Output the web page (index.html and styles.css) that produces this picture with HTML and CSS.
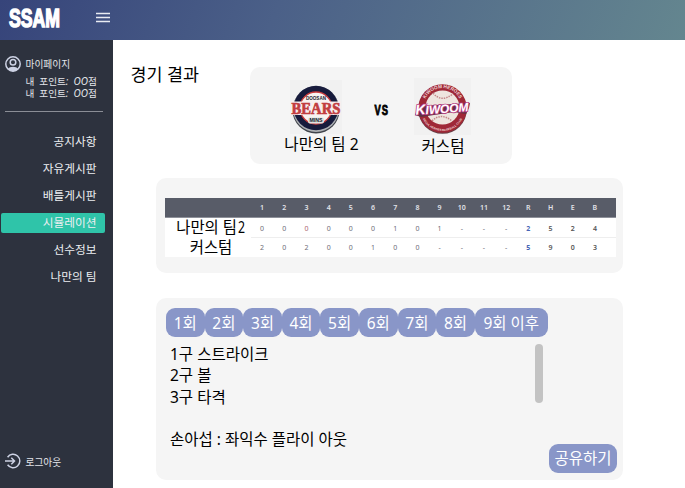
FILE: index.html
```html
<!DOCTYPE html>
<html lang="ko">
<head>
<meta charset="utf-8">
<title>SSAM</title>
<link rel="stylesheet" href="styles.css">
</head>
<body>
<header class="topbar">
  <svg class="logo" width="54" height="32" viewBox="0 0 54 32"><text x="1" y="24.8" textLength="51" lengthAdjust="spacingAndGlyphs">SSAM</text></svg>
  <svg class="burger" width="14" height="12" viewBox="0 0 14 12"><path d="M0 1.5h14M0 5.5h14M0 9.6h14"/></svg>
</header>
<div class="shell">
  <aside class="sidebar">
    <div class="profile">
      <svg width="16" height="16" viewBox="0 0 16 16"><circle cx="8" cy="8" r="7.2"/><circle cx="8" cy="6.3" r="2.8"/><path class="fill" d="M2.8 13C4.8 10 11.2 10 13.2 13C10.5 16 5.5 16 2.8 13Z"/></svg>
      <span>마이페이지</span>
    </div>
    <div class="points"><div>내&nbsp; 포인트<i>:&nbsp; OO</i>점</div><div>내&nbsp; 포인트<i>:&nbsp; OO</i>점</div></div>
    <nav class="menu">
      <a>공지사항</a><a>자유게시판</a><a>배틀게시판</a><a class="active">시뮬레이션</a><a>선수정보</a><a>나만의 팀</a>
    </nav>
    <div class="logout">
      <svg width="16" height="16" viewBox="0 0 16 16"><path d="M2.6 4.2A6.7 6.7 0 1 1 2.6 11.8M0 8h9.5M6.3 4.8L9.5 8L6.3 11.2"/></svg>
      <span>로그아웃</span>
    </div>
  </aside>
  <main class="content">
    <div class="top">
      <h1>경기 결과</h1>
      <section class="card match">
        <div class="team home">
          <svg width="52" height="54" viewBox="0 0 52 54">
            <rect width="52" height="54" fill="#f1f1f1"/>
            <circle cx="26" cy="30" r="23.5" fill="#40444b"/>
            <circle cx="26" cy="29" r="23" fill="#aeb1b5"/>
            <circle cx="26" cy="28" r="22.3" fill="#171b3c"/>
            <circle cx="26" cy="28" r="16" fill="#f7f3f1" stroke="#c93c3e" stroke-width="1.3"/>
            <text x="16" y="19.5" textLength="20" lengthAdjust="spacingAndGlyphs" class="tiny dark">DOOSAN</text>
            <path d="M1 21.5h50v13.5H1z" fill="#f7eeee"/>
            <text x="1.5" y="34" textLength="49" lengthAdjust="spacingAndGlyphs" class="bears">BEARS</text>
            <rect x="18" y="37.5" width="16" height="6" rx="2" fill="#dde2e1"/>
            <text x="19.5" y="42.4" textLength="13" lengthAdjust="spacingAndGlyphs" class="tiny dark">MINS</text>
          </svg>
          <span>나만의 팀 2</span>
        </div>
        <svg class="vs" width="20" height="24" viewBox="0 0 20 24"><text x="2.5" y="17.3" textLength="14.5" lengthAdjust="spacingAndGlyphs" letter-spacing="1.5">VS</text></svg>
        <div class="team away">
          <svg width="57" height="57" viewBox="0 0 57 57">
            <defs>
              <path id="arc-top" d="M9.5 29A19 19 0 0 1 47.5 29"/>
              <path id="arc-bottom" d="M6.5 31A22 22 0 0 0 50.5 31"/>
            </defs>
            <rect width="57" height="57" fill="#f1f1f1"/>
            <circle cx="28.5" cy="31.5" r="24.3" fill="#674047"/>
            <circle cx="28.5" cy="30.5" r="24.3" fill="#9f2837"/>
            <circle cx="28.5" cy="29.5" r="17" fill="#eee5df"/>
            <path d="M19 15Q27 25 39 16M18 43Q27 34 38 43" fill="none" stroke="#c48688" stroke-width="1.5" stroke-dasharray="1.5 1"/>
            <text class="ring"><textPath href="#arc-top" startOffset="50%" text-anchor="middle">KIWOOM HEROES</textPath></text>
            <text class="ring small"><textPath href="#arc-bottom" startOffset="50%" text-anchor="middle">SEOUL HEROES BASEBALL CLUB</textPath></text>
            <path d="M1 37L5 28L56 25L55 30L52 36L40 34L20 37L7 39Z" fill="#623044"/>
            <text transform="rotate(-4 28 31)" x="1.5" y="35" textLength="53" lengthAdjust="spacingAndGlyphs" class="kiwoom"><tspan font-size="14">K</tspan>IWOOM</text>
          </svg>
          <span>커스텀</span>
        </div>
      </section>
    </div>
    <section class="card scores">
      <div class="table">
        <div class="row head"><b></b><span>1</span><span>2</span><span>3</span><span>4</span><span>5</span><span>6</span><span>7</span><span>8</span><span>9</span><span>10</span><span>11</span><span>12</span><span>R</span><span>H</span><span>E</span><span>B</span></div>
        <div class="row first"><b>나만의 팀<em>2</em></b><span>0</span><span>0</span><span class="red">0</span><span>0</span><span>0</span><span>0</span><span>1</span><span>0</span><span>1</span><span>-</span><span>-</span><span>-</span><span class="blue">2</span><span class="bold">5</span><span class="bold">2</span><span class="bold">4</span></div>
        <div class="row"><b>커스텀</b><span>2</span><span>0</span><span>2</span><span>0</span><span>0</span><span>1</span><span>0</span><span>0</span><span>-</span><span>-</span><span>-</span><span>-</span><span class="blue">5</span><span class="bold">9</span><span class="bold">0</span><span class="bold">3</span></div>
      </div>
    </section>
    <section class="card log">
      <div class="tabs"><button>1회</button><button>2회</button><button>3회</button><button>4회</button><button>5회</button><button>6회</button><button>7회</button><button>8회</button><button class="wide">9회 이후</button></div>
      <div class="plays">
        <div class="lines"><p>1구 스트라이크</p><p>2구 볼</p><p>3구 타격</p><p>&nbsp;</p><p>손아섭 : 좌익수 플라이 아웃</p></div>
        <div class="thumb"></div>
      </div>
      <button class="share">공유하기</button>
    </section>
  </main>
</div>
</body>
</html>
```
FILE: styles.css
```css
* { box-sizing: border-box; }
body {
  margin: 0; width: 685px; height: 488px; overflow: hidden;
  display: flex; flex-direction: column; background: #fff; color: #000;
  font-family: "Noto Sans", "Noto Sans CJK KR", sans-serif; white-space: nowrap;
}
.topbar {
  height: 40px; flex: none; display: flex; align-items: flex-start; gap: 34px;
  padding: 2px 8px; background: linear-gradient(112deg, #36447a, #4b6088 40%, #64868f);
}
.logo text { font: bold 25px "Liberation Sans", sans-serif; fill: #fff; stroke: #fff; stroke-width: 1.5; }
.burger { margin-top: 10px; }
.burger path { stroke: #e9ecf3; stroke-width: 1.5; }
.shell { flex: 1; display: flex; min-height: 0; }
.sidebar {
  width: 113px; flex: none; display: flex; flex-direction: column;
  background: #2d323e; color: #e4e6ea; padding: 16px 0 19px;
}
.sidebar svg { fill: none; stroke: #cdd2e4; stroke-width: 1.5; }
.sidebar .fill { fill: #cdd2e4; stroke: none; }
.profile, .logout { display: flex; align-items: center; gap: 4.5px; padding-left: 5px; height: 16px; font-size: 9.7px; }
.logout { margin-top: auto; }
.logout span { margin-top: 1px; }
.points {
  margin: 4px 10px 0 5px; padding: 0 0 10px 20.5px; height: 36px;
  border-bottom: 1px solid #8b8e96; font-size: 9.6px; line-height: 12px;
}
.points div { height: 12px; line-height: 11px; }
.points i { font-size: 10px; }
.menu { display: flex; flex-direction: column; margin-top: 20px; gap: 7px; }
.menu a { height: 20px; line-height: 19px; margin: 0 8px 0 1px; padding-right: 8.5px; text-align: right; font-size: 11.7px; color: #eceef1; }
.menu .active { background: #2fc4a9; border-radius: 2px; }
.content { flex: 1; padding: 27px 62px 8px 42.5px; display: flex; flex-direction: column; }
.top { display: flex; margin-left: -25px; height: 97px; }
h1 { margin: -5px 0 0; width: 119.5px; font-weight: 400; font-size: 17.4px; line-height: 24px; }
.card { background: #f5f5f5; border-radius: 10px; }
.match { width: 262px; display: flex; padding: 12px 0 0 30px; }
.team { display: flex; flex-direction: column; align-items: center; font-size: 15.6px; line-height: 20px; }
.home { width: 82px; padding-top: 1px; }
.home svg { margin-left: -10px; }
.away { width: 82px; margin-left: 9px; }
.away svg { margin-top: -1px; }
.away span { margin: 1px 0 0 2px; }
.home span { margin-left: 1px; }
.vs { margin: 19px 0 0 10px; }
.vs text { font: bold 14px "Liberation Sans", sans-serif; stroke: #000; stroke-width: .9; }
.tiny { font: bold 4.5px "Liberation Sans", sans-serif; }
.dark { fill: #20222c; }
.bears { font: bold 17px "Liberation Serif", serif; fill: #c23d40; stroke: #c23d40; stroke-width: .7; }
.kiwoom { font: italic bold 12px "Liberation Sans", sans-serif; fill: #fff; stroke: #b83d83; stroke-width: 1.6; paint-order: stroke; }
.ring { font: bold 4.8px "Liberation Sans", sans-serif; fill: #f1d8d9; }
.small { font-size: 2.9px; }
.scores { margin-top: 14px; height: 95px; padding: 20px 7px 0 9.5px; }
.table { width: 451px; background: #fff; }
.row { display: grid; grid-template-columns: 86px repeat(16, 22.2px); height: 19px; align-items: center; }
.row span { text-align: center; font: 7px "Noto Sans", sans-serif; color: #6d6d77; }
.row b { font-weight: 400; font-size: 15.4px; line-height: 18px; text-align: center; padding-left: 6px; }
.row em { display: inline-block; font-style: normal; transform: scaleX(.8); }
.head { height: 20px; background: #585c68; border-bottom: 1px solid #8e919a; }
.row.head span { color: #e2e3e9; font-weight: 600; }
.first { height: 20px; background: linear-gradient(#eee, #eee) 86px 19px / 365px 1px no-repeat; }
.first b { margin-top: -1px; }
.row .red { color: #aa6870; }
.row .blue { color: #4765b5; font-weight: 700; }
.row .bold { font-weight: 600; color: #555; }
.log { margin-top: 25px; height: 182px; padding: 10px 6px 7px 10.5px; display: flex; flex-direction: column; }
.tabs { display: flex; }
button {
  border: 0; background: #8996c8; color: #fff; border-radius: 9px; height: 29px;
  width: 38.6px; padding: 0; font: 15.5px/29px "Noto Sans", "Noto Sans CJK KR", sans-serif; flex: none;
}
.tabs button { padding-top: 1px; line-height: 28px; }
.tabs .wide { width: 73px; }
.plays { display: flex; justify-content: space-between; height: 100px; margin: 7px 74px 0 4px; }
p { margin: 0; font-size: 15.5px; line-height: 21.3px; }
.thumb { width: 8px; height: 59px; border-radius: 4px; background: #c3c3c3; }
.share { width: 68px; align-self: flex-end; }
```
